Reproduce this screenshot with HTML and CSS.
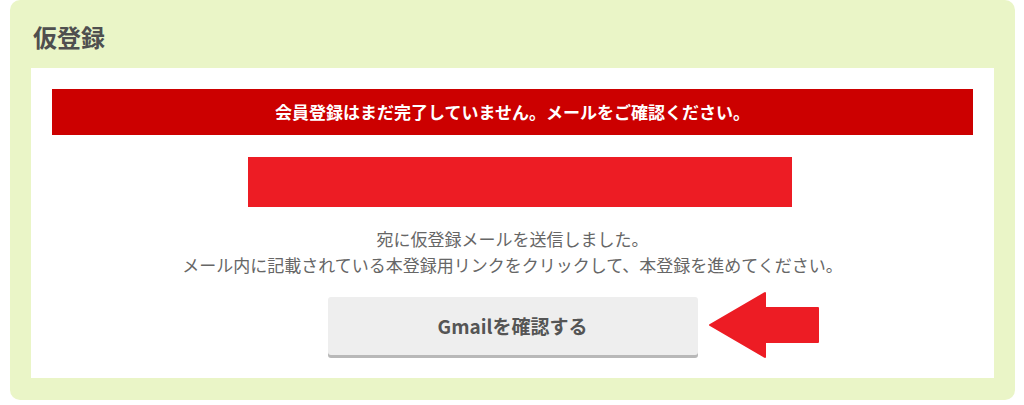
FILE: index.html
```html
<!DOCTYPE html>
<html lang="ja">
<head>
    <meta charset="UTF-8">
    <title>仮登録</title>
    <link rel="stylesheet" href="styles.css">
</head>
<body>
<section class="panel">
    <h1 class="panel-title">仮登録</h1>
    <div class="panel-body">
        <div class="alert">会員登録はまだ完了していません。メールをご確認ください。</div>
        <div class="mask"></div>
        <p class="message">
            宛に仮登録メールを送信しました。<br>
            メール内に記載されている本登録用リンクをクリックして、本登録を進めてください。
        </p>
        <div class="action">
            <a class="btn" href="#">Gmailを確認する</a>
            <svg class="arrow" width="112" height="68" viewBox="0 0 112 68">
                <polygon points="2,34 57,2 57,17 110,17 110,51 57,51 57,66"
                         fill="#ed1c24" stroke="#ed1c24" stroke-width="2" stroke-linejoin="round"/>
            </svg>
        </div>
    </div>
</section>
</body>
</html>
```

FILE: styles.css
```css
* {
    margin: 0;
    padding: 0;
    box-sizing: border-box;
}

body {
    font-family: "Noto Sans CJK JP", "Noto Sans", sans-serif;
    background: #fff;
}

.panel {
    width: 1005px;
    height: 400px;
    margin-left: 10px;
    padding: 0 21px 22px;
    background: #eaf5c7;
    border-radius: 10px;
}

.panel-title {
    font-size: 24px;
    font-weight: bold;
    line-height: 34px;
    color: #4f4f4f;
    padding: 20px 0 14px 2px;
}

.panel-body {
    background: #fff;
    padding: 21px 21px 23px;
    display: flex;
    flex-direction: column;
    align-items: center;
}

.alert {
    width: 100%;
    height: 46px;
    line-height: 46px;
    background: #cc0000;
    color: #fff;
    font-size: 17px;
    font-weight: bold;
    text-align: center;
}

/* 伏せ字 (メールアドレス) */
.mask {
    width: 544px;
    height: 50px;
    margin: 22px 0 0 14px;
    background: #ed1c24;
}

.message {
    margin-top: 19px;
    font-size: 17px;
    line-height: 26px;
    color: #666;
    text-align: center;
}

.action {
    margin-top: 19px;
    position: relative;
}

.btn {
    display: block;
    width: 370px;
    height: 58px;
    line-height: 58px;
    background: #eeeeee;
    border-radius: 3px;
    box-shadow: 0 3px 0 #b8b8b8;
    color: #555;
    font-size: 19px;
    font-weight: bold;
    text-align: center;
    text-decoration: none;
}

.arrow {
    position: absolute;
    left: 380px;
    top: -6px;
}
```
